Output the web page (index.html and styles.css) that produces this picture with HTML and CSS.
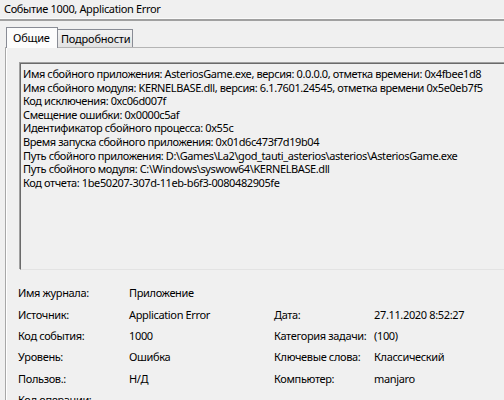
FILE: index.html
```html
<!DOCTYPE html>
<html lang="ru">
<head>
<meta charset="utf-8">
<link rel="stylesheet" href="styles.css">
</head>
<body>
<div class="win">
  <div class="title">Событие 1000, Application Error</div>
  <div class="rule"></div>
  <div class="tabs">
    <div class="tab active">Общие</div>
    <div class="tab">Подробности</div>
  </div>
  <div class="panel">
    <div class="textbox">
      <div class="line">Имя сбойного приложения: AsteriosGame.exe, версия: 0.0.0.0, отметка времени: 0x4fbee1d8</div>
      <div class="line">Имя сбойного модуля: KERNELBASE.dll, версия: 6.1.7601.24545, отметка времени 0x5e0eb7f5</div>
      <div class="line">Код исключения: 0xc06d007f</div>
      <div class="line">Смещение ошибки: 0x0000c5af</div>
      <div class="line">Идентификатор сбойного процесса: 0x55c</div>
      <div class="line">Время запуска сбойного приложения: 0x01d6c473f7d19b04</div>
      <div class="line">Путь сбойного приложения: D:\Games\La2\god_tauti_asterios\asterios\AsteriosGame.exe</div>
      <div class="line">Путь сбойного модуля: C:\Windows\syswow64\KERNELBASE.dll</div>
      <div class="line">Код отчета: 1be50207-307d-11eb-b6f3-0080482905fe</div>
    </div>
    <div class="details">
      <div class="label">Имя журнала:</div><div class="value">Приложение</div><div></div><div></div>
      <div class="label">Источник:</div><div class="value">Application Error</div><div class="label">Дата:</div><div class="value">27.11.2020 8:52:27</div>
      <div class="label">Код события:</div><div class="value">1000</div><div class="label">Категория задачи:</div><div class="value">(100)</div>
      <div class="label">Уровень:</div><div class="value">Ошибка</div><div class="label">Ключевые слова:</div><div class="value">Классический</div>
      <div class="label">Пользов.:</div><div class="value">Н/Д</div><div class="label">Компьютер:</div><div class="value">manjaro</div>
      <div class="label">Код операции:</div><div class="value"></div><div></div><div></div>
    </div>
  </div>
</div>
</body>
</html>
```
FILE: styles.css
```css
html, body {
  margin: 0;
  padding: 0;
  background: #f0f0f0;
  overflow: hidden;
}
.win {
  width: 504px;
  height: 400px;
  overflow: hidden;
  font-family: "Noto Sans", "Open Sans", sans-serif;
  font-size: 11px;
  color: #000;
}
.title {
  height: 18px;
  line-height: 18px;
  padding-left: 4px;
  font-size: 11px;
  letter-spacing: -0.35px;
  white-space: nowrap;
}
.rule {
  height: 2px;
  border-top: 1px solid #fafafa;
  background: #a0a0a0;
}
.tabs {
  display: flex;
  align-items: flex-end;
  padding-left: 6px;
  margin-top: 5px;
  height: 21px;
  position: relative;
  z-index: 1;
  letter-spacing: -0.2px;
}
.tab {
  height: 17px;
  line-height: 17px;
  padding: 0 3px;
  border: 1px solid #898c95;
  border-bottom: none;
  background: linear-gradient(#f2f2f2, #e3e3e3);
  white-space: nowrap;
}
.tab.active {
  height: 20px;
  line-height: 20px;
  padding: 0 6px;
  width: 38px;
  background: #fcfcfc;
  margin-bottom: -1px;
  position: relative;
}
.tab + .tab {
  margin-left: -1px;
  width: 68px;
}
.panel {
  margin-left: 5px;
  border-left: 1px solid #a8a8a8;
  border-top: 1px solid #b4b4b4;
  box-shadow: inset 1px 0 0 #fff;
  padding: 15px 0 0 14px;
  width: 600px;
  height: 400px;
}
.textbox {
  border: 1px solid;
  border-color: #6a6a6a #ffffff #e3e3e3 #6a6a6a;
  box-shadow: -1px -1px 0 #a0a0a0;
  height: 199px;
  padding: 3px 2px;
  white-space: nowrap;
  letter-spacing: -0.4px;
}
.line {
  height: 13.6px;
  line-height: 13.6px;
}
.details {
  display: grid;
  grid-template-columns: 111px 145px 100px 1fr;
  grid-auto-rows: 21.4px;
  align-items: center;
  margin-top: 12px;
  margin-left: -2px;
  white-space: nowrap;
  letter-spacing: -0.35px;
}
```
